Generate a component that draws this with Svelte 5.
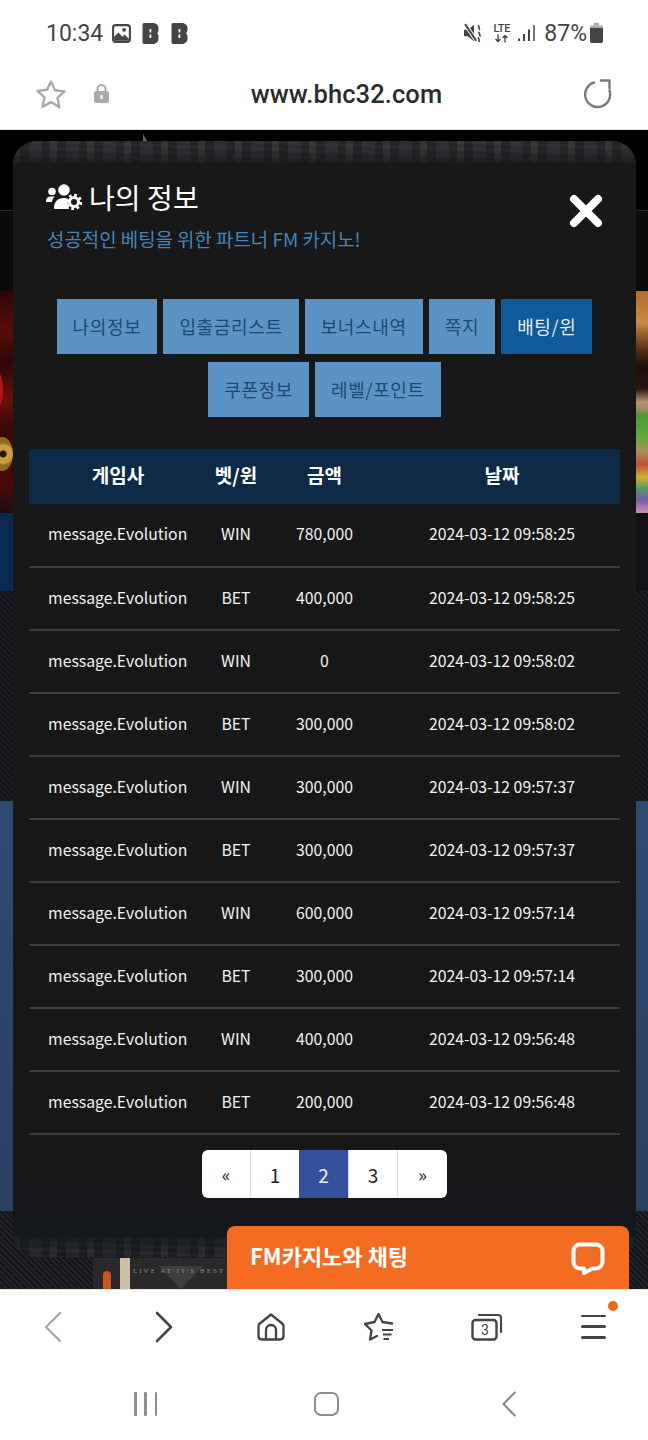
<script>
  const tabsA = ['나의정보', '입출금리스트', '보너스내역', '쪽지', '배팅/윈'];
  const tabsB = ['쿠폰정보', '레벨/포인트'];
  const rows = [
    ['WIN', '780,000', '2024-03-12 09:58:25'],
    ['BET', '400,000', '2024-03-12 09:58:25'],
    ['WIN', '0', '2024-03-12 09:58:02'],
    ['BET', '300,000', '2024-03-12 09:58:02'],
    ['WIN', '300,000', '2024-03-12 09:57:37'],
    ['BET', '300,000', '2024-03-12 09:57:37'],
    ['WIN', '600,000', '2024-03-12 09:57:14'],
    ['BET', '300,000', '2024-03-12 09:57:14'],
    ['WIN', '400,000', '2024-03-12 09:56:48'],
    ['BET', '200,000', '2024-03-12 09:56:48']
  ];
  const pages = ['«', '1', '2', '3', '»'];
</script>

<div class="phone">
  <header class="status">
    <div class="status-left">
      <span class="clock">10:34</span>
      <svg class="ic-pic" viewBox="0 0 20 20"><rect x="1" y="1" width="18" height="18" rx="3.5" fill="#444"/><rect x="3" y="3" width="14" height="14" rx="1.5" fill="#fff"/><path d="M3 13l4-4 4 4 2-2 4 4v2H3z" fill="#444"/><circle cx="12.5" cy="6.5" r="1.8" fill="#444"/></svg>
      <svg class="ic-b" viewBox="0 0 16 21"><path fill-rule="evenodd" d="M1.500 0H10c3 0 6 1.500 6 5v2c0 1.600-.7 2.700-1.500 3.300.9.700 1.500 1.900 1.500 3.400V16c0 3-3 5-6 5H1.500C.5 21 0 20 0 19V2C0 1 .5 0 1.500 0zM7 6v3.500h1.800V6zm0 5.500V15h1.800v-3.500z" fill="#444"/></svg>
      <svg class="ic-b" viewBox="0 0 16 21"><path fill-rule="evenodd" d="M1.500 0H10c3 0 6 1.500 6 5v2c0 1.600-.7 2.700-1.500 3.300.9.700 1.500 1.900 1.500 3.400V16c0 3-3 5-6 5H1.500C.5 21 0 20 0 19V2C0 1 .5 0 1.500 0zM7 6v3.500h1.800V6zm0 5.500V15h1.800v-3.500z" fill="#444"/></svg>
    </div>
    <div class="status-right">
      <svg class="ic-mute" viewBox="0 0 18 18"><path d="M0 6h3.500L9 1.500v15L3.500 12H0z" fill="#444"/><path d="M1 1l10 15" stroke="#fff" stroke-width="3.500"/><path d="M1 1l10 15" stroke="#444" stroke-width="1.800"/><path d="M12.500 2c2 1 0 3 2 4M13 8c2 1 0 3 2 4M12.500 13c2 1 0 2 1.500 4" fill="none" stroke="#444" stroke-width="1.500"/></svg>
      <span class="lte"><b>LTE</b><svg viewBox="0 0 16 8"><path d="M4 0v7M1.500 4.500L4 7l2.500-2.500M11 8V1M8.500 3.500L11 1l2.500 2.500" fill="none" stroke="#444" stroke-width="1.400"/></svg></span>
      <svg class="ic-signal" viewBox="0 0 18 18"><rect x="0" y="14.500" width="2" height="2.500" fill="#444"/><rect x="5" y="10" width="2" height="7" fill="#444"/><rect x="10" y="5.500" width="2" height="11.500" fill="#444"/><rect x="15" y="1" width="2" height="16" fill="#777"/></svg>
      <span class="pct">87%</span>
      <svg class="ic-batt" viewBox="0 0 13 20"><path d="M4 0h5v2.500H4z" fill="#aaa"/><path d="M1.500 2.500h10c.8 0 1.500.7 1.500 1.500v1H0V4c0-.8.700-1.500 1.500-1.500z" fill="#aaa"/><path d="M0 5h13v13c0 1-.7 2-1.500 2h-10C.7 20 0 19 0 18z" fill="#444"/></svg>
    </div>
  </header>

  <div class="urlbar">
    <svg class="ic-star" viewBox="0 0 32 30"><path d="M16 2.500l4 8.800 9.500 1.100-7 6.500 1.900 9.400L16 23.100l-8.400 4.700 1.900-9.400-7-6.500 9.500-1.100z" fill="none" stroke="#a9a9a9" stroke-width="2.400" stroke-linejoin="round"/></svg>
    <svg class="ic-lock" viewBox="0 0 15 19"><path d="M3.500 8V5a4 4 0 018 0v3" fill="none" stroke="#a9a9a9" stroke-width="2"/><rect y="7" width="15" height="12" rx="2.500" fill="#a9a9a9"/><rect x="6.500" y="11" width="2" height="4" fill="#fff"/></svg>
    <span class="url">www.bhc32.com</span>
    <svg class="ic-reload" viewBox="0 0 30 30"><path d="M10 3.500A12.500 12.500 0 1 0 25.500 11.500" fill="none" stroke="#7a7a7a" stroke-width="2.400" stroke-linecap="round"/><path d="M17 1.500H25.500V9" fill="none" stroke="#7a7a7a" stroke-width="2.400" stroke-linecap="round" stroke-linejoin="round"/></svg>
  </div>

  <main class="page">
    <div class="bands" aria-hidden="true">
      <div class="band b1"><i class="spike"></i></div>
      <div class="band b2"></div>
      <div class="band b3">
        <div class="side-l"><i class="flare"></i><i class="coin"></i></div>
        <div class="side-r"></div>
      </div>
      <div class="band b4"></div>
      <div class="band b5"></div>
      <div class="band b6"></div>
      <div class="band b7">
        <div class="poster"><i class="orange"></i><i class="tan"></i><i class="tri"></i><span>LIVE AT IT'S BEST</span></div>
      </div>
    </div>

    <section class="modal">
      <div class="strip"></div>
      <div class="modal-body">
        <div class="head">
          <div>
            <h1>
              <svg class="ic-users" viewBox="0 0 36 26">
                <circle cx="6" cy="7.500" r="3.800" fill="#fff"/>
                <circle cx="18" cy="6" r="5.800" fill="#fff"/>
                <path d="M0 17c0-3 2-4.500 5-4.500h4c-1.800 1.300-3 3.300-3 5.500H1c-.6 0-1-.4-1-1z" fill="#fff"/>
                <path d="M8 24c0-6 3.500-10 10-10 1.500 0 3 .2 4 .7-.4 3-.4 6.500 1 10.300H9c-.6 0-1-.4-1-1z" fill="#fff"/>
                <circle cx="28" cy="18" r="4.500" fill="none" stroke="#fff" stroke-width="3"/>
                <circle cx="28" cy="18" r="6.800" fill="none" stroke="#fff" stroke-width="2.800" stroke-dasharray="2.700 2.640"/>
              </svg>
              <span>나의 정보</span>
            </h1>
            <p class="sub">성공적인 베팅을 위한 파트너 FM 카지노!</p>
          </div>
          <svg class="ic-close" viewBox="0 0 34 34"><path d="M5 5l24 24M29 5L5 29" stroke="#fff" stroke-width="8" stroke-linecap="round"/></svg>
        </div>

        <nav class="tabs">
          <div class="tab-row">
            {#each tabsA as t}
              <span class="tab" class:on={t === '배팅/윈'}>{t}</span>
            {/each}
          </div>
          <div class="tab-row">
            {#each tabsB as t}
              <span class="tab">{t}</span>
            {/each}
          </div>
        </nav>

        <table>
          <colgroup><col class="c1" /><col class="c2" /><col class="c3" /><col class="c4" /></colgroup>
          <thead>
            <tr><th>게임사</th><th>벳/윈</th><th>금액</th><th>날짜</th></tr>
          </thead>
          <tbody>
            {#each rows as r}
              <tr>
                <td class="game">message.Evolution</td>
                <td>{r[0]}</td>
                <td>{r[1]}</td>
                <td>{r[2]}</td>
              </tr>
            {/each}
          </tbody>
        </table>

        <div class="pager">
          {#each pages as p}
            <span class="pg" class:sym={p === '«' || p === '»'} class:cur={p === '2'}>{p}</span>
          {/each}
        </div>
      </div>
      <div class="strip low"></div>
    </section>

    <div class="chat">
      <span>FM카지노와 채팅</span>
      <svg class="ic-chat" viewBox="0 0 34 33"><path d="M9 2.500h16c3.600 0 6.500 2.900 6.500 6.500v11c0 3.600-2.900 6.500-6.500 6.500h-3.500L13 31v-4.500H9c-3.600 0-6.500-2.900-6.500-6.500V9C2.500 5.400 5.400 2.500 9 2.500z" fill="none" stroke="#fff" stroke-width="4" stroke-linejoin="round"/></svg>
    </div>
  </main>

  <footer class="toolbar">
    <svg class="tb back" viewBox="0 0 20 32"><path d="M17 2L3 16l14 14" fill="none" stroke="#a5a5a5" stroke-width="2.200" stroke-linecap="round" stroke-linejoin="round"/></svg>
    <svg class="tb fwd" viewBox="0 0 20 32"><path d="M3 2l14 14L3 30" fill="none" stroke="#444" stroke-width="2.600" stroke-linecap="round" stroke-linejoin="round"/></svg>
    <svg class="tb home" viewBox="0 0 28 28"><path d="M2.800 10.500L14 1.500l11.200 9c.9.700 1.300 1.500 1.300 2.500v10c0 2-1.500 3.500-3.500 3.500H5c-2 0-3.500-1.500-3.500-3.500V13c0-1 .4-1.800 1.300-2.500z" fill="none" stroke="#444" stroke-width="2.300" stroke-linejoin="round"/><path d="M9 26.500V17c0-2.800 2-5 5-5s5 2.200 5 5v9.500" fill="none" stroke="#444" stroke-width="2.300"/></svg>
    <svg class="tb fav" viewBox="0 0 30 28"><path d="M28 10.500L18.500 9 14.500 1l-4 8L1 11l6.500 6.500L6 26.500 13 23" fill="none" stroke="#444" stroke-width="2.300" stroke-linecap="round" stroke-linejoin="round"/><path d="M18 17h11M19 21.500h8.500M19.500 26h5.500" stroke="#444" stroke-width="2.200"/></svg>
    <span class="tb tabs-ic">
      <svg viewBox="0 0 32 28"><path d="M8 2h19c2 0 3 1 3 3v14" fill="none" stroke="#444" stroke-width="2.200" stroke-linecap="round"/><rect x="1.500" y="7" width="24" height="19.500" rx="3" fill="none" stroke="#444" stroke-width="2.400"/></svg>
      <b>3</b>
    </span>
    <span class="tb menu"><i></i><i></i><i></i><em></em></span>
  </footer>

  <div class="softkeys">
    <span class="recent"><i></i><i></i><i></i></span>
    <span class="hm"></span>
    <svg class="sk-back" viewBox="0 0 14 26"><path d="M12.800 1.500L1.500 13l11.300 11.500" fill="none" stroke="#8e8e8e" stroke-width="2.200" stroke-linecap="round" stroke-linejoin="round"/></svg>
  </div>
</div>

<style>
  :global(body) { margin: 0; background: #fff; }
  .phone { width: 648px; height: 1440px; display: flex; flex-direction: column; overflow: hidden; font-family: "Noto Sans CJK KR", "Noto Sans", sans-serif; background: #fff; }

  .status { height: 66px; flex: none; display: flex; justify-content: space-between; align-items: center; padding: 0 45px 0 46px; color: #444; font-family: Roboto, sans-serif; }
  .status-left, .status-right { display: flex; align-items: center; }
  .clock { font-size: 23px; line-height: 1; margin-right: 8px; }
  .ic-pic { width: 21px; height: 21px; margin-right: 10px; }
  .ic-b { width: 17px; height: 21px; margin-right: 12px; }
  .status-left .ic-b:last-child { margin-right: 0; }
  .ic-mute { width: 20px; height: 20px; margin-right: 8px; }
  .lte { width: 19px; display: flex; flex-direction: column; align-items: center; margin-right: 7px; }
  .lte b { font-size: 11px; line-height: 11px; font-weight: 500; color: #444; letter-spacing: -.3px; }
  .lte svg { width: 16px; height: 9px; }
  .ic-signal { width: 18px; height: 18px; margin-right: 8px; }
  .pct { font-size: 23px; line-height: 1; margin-right: 3px; }
  .ic-batt { width: 13px; height: 20px; }

  .urlbar { height: 64px; flex: none; box-sizing: border-box; border-bottom: 1px solid #e4e4e4; display: flex; align-items: center; padding: 0 35px 8px 35px; position: relative; }
  .ic-star { width: 32px; height: 30px; margin-right: 27px; }
  .ic-lock { width: 15px; height: 19px; }
  .url { flex: 1; text-align: center; font: 500 25.500px Roboto, sans-serif; color: #2b2b2b; letter-spacing: .1px; }
  .ic-reload { width: 30px; height: 30px; margin-right: -1px; }

  .page { height: 1159px; flex: none; position: relative; background: #0d0d0d; overflow: hidden; }
  .bands { display: flex; flex-direction: column; height: 100%; }
  .band { flex: none; position: relative; }
  .b1 { height: 80px; background: #000; }
  .spike { position: absolute; left: 143px; top: 4px; border-left: 4px solid #6a6a6a; border-top: 7px solid transparent; }
  .b2 { height: 81px; background: #0a0a0a; border-top: 1px solid #2a2a2a; box-sizing: border-box; }
  .b3 { height: 222px; background: #15202c; }
  .side-l { position: absolute; left: 0; top: 0; width: 14px; height: 222px; overflow: hidden; background: linear-gradient(180deg, #2e0606 0%, #5a0d0a 18%, #2a0605 32%, #6a100c 48%, #3a0807 62%, #4a0a08 88%, #1a0c10 100%); }
  .flare { position: absolute; left: -6px; top: 82px; width: 9px; height: 34px; border-radius: 50%; background: #b01510; }
  .coin { position: absolute; left: -9px; top: 146px; width: 22px; height: 34px; border-radius: 50%; background: radial-gradient(circle at 55% 50%, #2a1a08 0 3px, #c9a040 4px 9px, #8f6c20 11px); }
  .side-r { position: absolute; right: 0; top: 0; width: 12px; height: 222px; background: linear-gradient(180deg, #b06c2c 0%, #c98a45 14%, #5c2e16 26%, #1a0d0a 34%, #2a1610 44%, #b89070 50%, #a08a60 53%, #4c9a34 56%, #64a83c 66%, #a8905a 72%, #c0503a 78%, #d0b030 84%, #4f9a60 89%, #7a5aa8 94%, #c890b0 100%); }
  .b4 { height: 78px; background: linear-gradient(90deg, #0a2b50 0 14px, #101216 14px); }
  .b5 { height: 210px; background: repeating-linear-gradient(45deg, #1b1c20 0 2px, #121316 2px 4px); }
  .b6 { height: 410px; background: linear-gradient(180deg, #2f4a72, #2b3f60); }
  .b7 { height: 78px; background: repeating-linear-gradient(45deg, #212227 0 2px, #141518 2px 4px); }
  .poster { position: absolute; left: 93px; top: 47px; width: 140px; height: 31px; background: #29292b; overflow: hidden; }
  .orange { position: absolute; left: 10px; top: 13px; width: 8px; height: 18px; border-radius: 4px 4px 0 0; background: #c9541c; }
  .tan { position: absolute; left: 27px; top: 0; width: 10px; height: 31px; background: #cfc0a2; }
  .tri { position: absolute; left: 66px; top: 8px; border-left: 22px solid transparent; border-right: 22px solid transparent; border-top: 23px solid #3e3e40; }
  .poster span { position: absolute; left: 40px; top: 9px; font: 7px "Liberation Serif", serif; color: #8c8c8c; letter-spacing: 2px; white-space: nowrap; }

  .modal { position: absolute; left: 13px; top: 11px; width: 623px; height: 1116px; border-radius: 24px; overflow: hidden; background: #171717; display: flex; flex-direction: column; }
  .strip { height: 22px; flex: none; background:
    linear-gradient(180deg, rgba(24,24,24,0) 30%, rgba(24,24,24,.75) 100%),
    repeating-linear-gradient(91deg, rgba(70,72,75,.35) 0 7px, rgba(20,20,22,.3) 7px 16px, rgba(55,56,60,.3) 16px 29px, rgba(18,18,20,.25) 29px 37px),
    repeating-linear-gradient(2deg, #2f3032 0 3px, #28292b 3px 7px); }
  .strip.low { height: 20px; background:
    linear-gradient(0deg, rgba(24,26,30,0) 30%, rgba(22,24,28,.7) 100%),
    repeating-linear-gradient(91deg, rgba(60,62,70,.3) 0 7px, rgba(15,16,20,.3) 7px 16px, rgba(50,52,60,.25) 16px 29px, rgba(15,16,20,.25) 29px 37px),
    repeating-linear-gradient(2deg, #25272b 0 3px, #1e2024 3px 7px); }
  .modal-body { flex: 1; min-height: 0; padding: 0 16px; background: linear-gradient(180deg, #181818 0, #171717 92%, #14181d 100%); }

  .head { display: flex; justify-content: space-between; height: 136px; padding: 0 17px 0 17px; box-sizing: border-box; }
  h1 { margin: 16px 0 0; display: flex; align-items: center; font-weight: 400; font-size: 28px; line-height: 36px; color: #fff; }
  h1 span { margin-left: 7px; letter-spacing: .1px; }
  .ic-users { width: 36px; height: 26px; }
  .sub { margin: 11px 0 0 1px; font-size: 18.900px; line-height: 26px; color: #3f86bf; font-weight: 400; white-space: nowrap; }
  .ic-close { width: 34px; height: 34px; margin-top: 31px; }

  .tabs { display: flex; flex-direction: column; gap: 8px; }
  .tab-row { display: flex; justify-content: center; gap: 6px; }
  .tab { height: 55px; line-height: 55px; padding: 0 16px; box-sizing: border-box; background: #5b93c4; color: #1e4a75; font-size: 18px; letter-spacing: .65px; white-space: nowrap; }
  .tab.on { background: #0f5a98; color: #e6eef5; }

  table { width: 591px; margin-top: 32px; border-collapse: collapse; table-layout: fixed; color: #fff; }
  .c1 { width: 178px; } .c2 { width: 58px; } .c3 { width: 119px; } .c4 { width: 236px; }
  th { height: 55px; padding: 0 0 4px; box-sizing: border-box; background: #0f2a47; font-size: 19px; font-weight: 700; }
  td { height: 63px; box-sizing: border-box; padding: 0 0 3px; text-align: center; font-size: 15.800px; font-weight: 400; color: #f1f1f1; border-bottom: 2px solid #3a3c40; }
  td.game { text-align: left; padding-left: 19px; }

  .pager { display: flex; justify-content: center; margin-top: 15px; }
  .pg { width: 49px; height: 48px; box-sizing: border-box; display: flex; align-items: center; justify-content: center; background: #fff; color: #222; font-size: 19px; border-left: 1px solid #dcdcdc; }
  .pg:first-child { width: 48px; border-left: 0; border-radius: 6px 0 0 6px; }
  .pg:last-child { width: 50px; border-radius: 0 6px 6px 0; }
  .pg.sym { font-size: 18px; }
  .pg.cur { background: #34509a; color: #e8ecf5; border-left: 0; }

  .chat { position: absolute; left: 227px; top: 1096px; width: 402px; height: 63px; box-sizing: border-box; padding: 0 24px 0 23px; border-radius: 8px 8px 0 0; background: #f36c21; display: flex; align-items: center; justify-content: space-between; color: #fff; font-size: 22px; font-weight: 700; }
  .chat span { padding-bottom: 5px; }
  .ic-chat { width: 34px; height: 33px; margin-top: 2px; }

  .toolbar { height: 74px; flex: none; position: relative; display: flex; align-items: center; border-top: 1px solid #f2dfd0; box-sizing: border-box; }
  .tb { flex: none; display: block; }
  .back { width: 20px; height: 32px; margin-left: 43px; }
  .fwd { width: 20px; height: 32px; margin-left: 91px; }
  .home { width: 28px; height: 28px; margin-left: 83px; }
  .fav { width: 30px; height: 28px; margin-left: 79px; }
  .tabs-ic { width: 32px; height: 28px; margin-left: 77px; position: relative; }
  .tabs-ic svg { width: 32px; height: 28px; display: block; }
  .tabs-ic b { position: absolute; left: 1px; top: 7px; width: 26px; text-align: center; font: 400 14px/20px Roboto, sans-serif; color: #444; }
  .menu { width: 25px; height: 24px; margin-left: 78px; position: relative; display: flex; flex-direction: column; justify-content: space-between; }
  .menu i { display: block; height: 2.500px; background: #444; border-radius: 2px; }
  .menu em { position: absolute; left: 27px; top: -14px; width: 10px; height: 10px; border-radius: 50%; background: #f0651f; }

  .softkeys { height: 77px; flex: none; position: relative; display: flex; align-items: center; padding-top: 4px; box-sizing: border-box; }
  .recent { margin-left: 134px; width: 23px; height: 24px; display: flex; justify-content: space-between; }
  .recent i { width: 2.500px; background: #8e8e8e; border-radius: 1px; }
  .hm { margin-left: 157px; width: 25px; height: 24px; box-sizing: border-box; border: 2.500px solid #8e8e8e; border-radius: 7px; }
  .sk-back { margin-left: 163px; width: 14px; height: 26px; }
</style>
